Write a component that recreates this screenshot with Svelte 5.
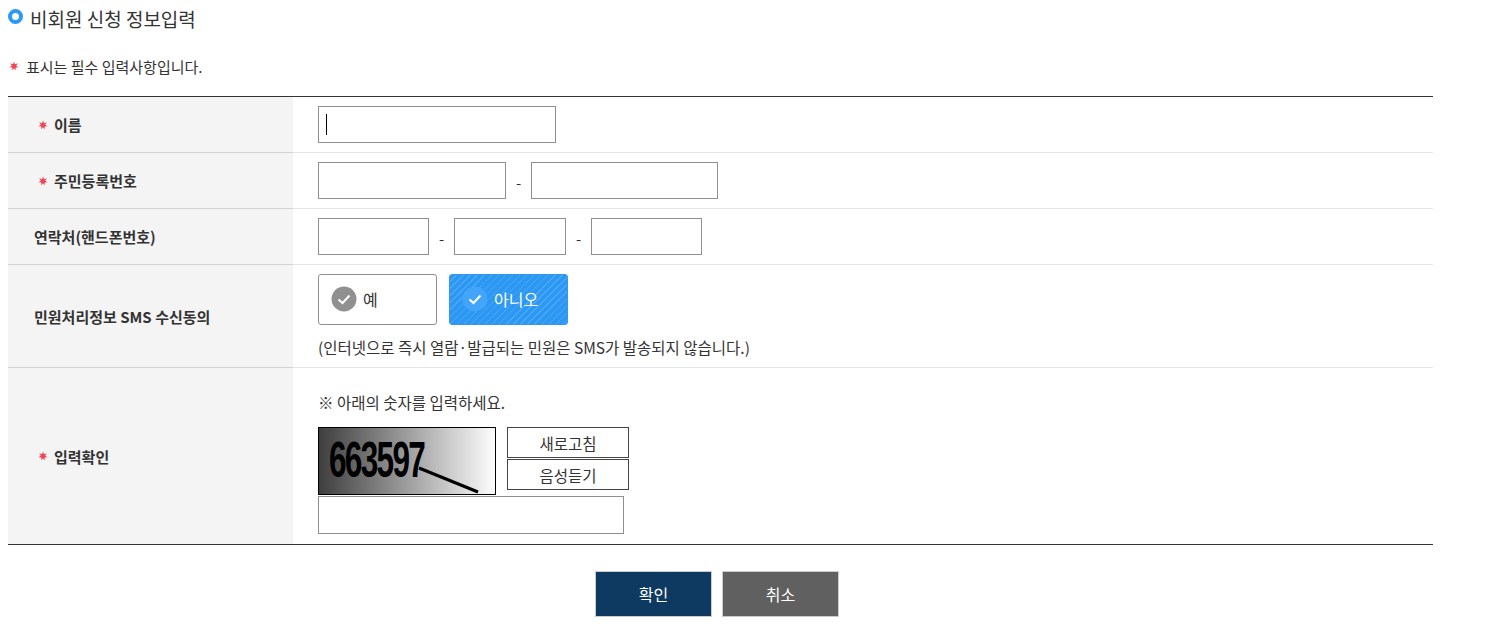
<script>
  const star = "M5 0.5 L6 3.2 L8.8 2.2 L7.2 4.7 L9.6 6.2 L6.7 6.4 L6.6 9.5 L5 7.2 L3.4 9.5 L3.3 6.4 L0.4 6.2 L2.8 4.7 L1.2 2.2 L4 3.2 Z"
</script>

{#snippet mark()}
  <svg class="mark" width="10" height="10" viewBox="0 0 10 10"><path d={star} fill="#ee4455" /></svg>
{/snippet}

{#snippet check(bg)}
  <svg class="check" width="26" height="26" viewBox="0 0 26 26">
    <circle cx="13" cy="13" r="12.5" fill={bg} />
    <path d="M7.5 13.5 L11.5 17 L18.5 9.5" fill="none" stroke="#fff" stroke-width="2" />
  </svg>
{/snippet}

<div class="page">
  <h2 class="title"><span class="dot"></span>비회원 신청 정보입력</h2>
  <p class="note">{@render mark()}<span>표시는 필수 입력사항입니다.</span></p>

  <div class="form">
    <div class="row r1">
      <div class="label req">{@render mark()}이름</div>
      <div class="field"><span class="name-input"><i class="caret"></i></span></div>
    </div>
    <div class="row r2">
      <div class="label req">{@render mark()}주민등록번호</div>
      <div class="field">
        <input class="w188" /><span class="dash">-</span><input class="w187" />
      </div>
    </div>
    <div class="row r3">
      <div class="label">연락처(핸드폰번호)</div>
      <div class="field">
        <input class="w111" /><span class="dash">-</span><input class="w112" /><span class="dash">-</span><input class="w111" />
      </div>
    </div>
    <div class="row r4">
      <div class="label">민원처리정보 SMS 수신동의</div>
      <div class="field stack">
        <div class="choices">
          <div class="choice">{@render check("#909090")}<span>예</span></div>
          <div class="choice on">{@render check("#42a5fb")}<span>아니오</span></div>
        </div>
        <p class="hint">(인터넷으로 즉시 열람·발급되는 민원은 SMS가 발송되지 않습니다.)</p>
      </div>
    </div>
    <div class="row r5">
      <div class="label req">{@render mark()}입력확인</div>
      <div class="field stack">
        <p class="guide">※ 아래의 숫자를 입력하세요.</p>
        <div class="captcha-row">
          <div class="captcha">
            <svg width="176" height="66" viewBox="0 0 176 66">
              <text x="10" y="49" transform="translate(10 0) scale(0.83 1.32) translate(-10 -12)" class="digits">663597</text>
              <path d="M100 40 L159 64" stroke="#000" stroke-width="3" />
            </svg>
          </div>
          <div class="captcha-btns">
            <button type="button">새로고침</button>
            <button type="button">음성듣기</button>
          </div>
        </div>
        <input class="answer" />
      </div>
    </div>
  </div>

  <div class="actions">
    <button type="button" class="ok">확인</button>
    <button type="button" class="cancel">취소</button>
  </div>
</div>

<style>
  :global(body) {
    background: #fff;
    font-family: "Noto Sans CJK KR", "Noto Sans", sans-serif;
    color: #333;
  }

  .page {
    width: 1425px;
    margin-left: 8px;
    height: 635px;
    overflow: hidden;
  }

  .title {
    display: flex;
    align-items: center;
    gap: 7px;
    margin: 0;
    height: 36px;
    font-size: 19px;
    font-weight: 400;
    color: #333;
  }

  .dot {
    width: 15px;
    height: 15px;
    box-sizing: border-box;
    border: 4px solid #2a9af2;
    border-radius: 50%;
    margin-top: -4px;
  }

  .note {
    display: flex;
    align-items: center;
    gap: 7px;
    margin: 0;
    height: 60px;
    padding: 0 0 10px 1px;
    box-sizing: border-box;
    font-size: 15px;
    color: #333;
    padding-top: 10px;
  }

  .form {
    border-top: 1px solid #333;
    border-bottom: 1px solid #333;
  }

  .row {
    display: grid;
    grid-template-columns: 285px 1fr;
    border-bottom: 1px solid #e6e6e6;
  }

  .row:last-child {
    border-bottom: 0;
  }

  .r1, .r2, .r3 { height: 55px; }
  .r4 { height: 102px; }
  .r5 { height: 176px; }

  .label {
    display: flex;
    align-items: center;
    background: #f4f4f4;
    padding-left: 26px;
    font-size: 15px;
    font-weight: 700;
    color: #333;
    box-shadow: 0 1px 0 #d4d4d4;
  }

  .r5 .label { box-shadow: none; }

  .req {
    padding-left: 30px;
    gap: 6px;
  }

  .field {
    display: flex;
    align-items: flex-start;
    padding: 9px 0 0 25px;
  }

  .stack {
    flex-direction: column;
  }

  input, .name-input {
    display: block;
    box-sizing: border-box;
    height: 37px;
    border: 1px solid #8f8f8f;
    background: #fff;
    padding: 0;
    margin: 0;
    outline: 0;
  }

  .name-input {
    width: 238px;
    display: flex;
    align-items: center;
    padding-left: 7px;
  }

  .caret {
    width: 1px;
    height: 21px;
    background: #000;
  }

  .w188 { width: 188px; }
  .w187 { width: 187px; }
  .w111 { width: 111px; }
  .w112 { width: 112px; }

  .dash {
    width: 25px;
    text-align: center;
    line-height: 42px;
    font-size: 15px;
    color: #333;
  }

  .choices {
    display: flex;
    gap: 12px;
  }

  .choice {
    display: flex;
    align-items: center;
    gap: 6px;
    width: 119px;
    height: 51px;
    box-sizing: border-box;
    border: 1px solid #8f8f8f;
    border-radius: 3px;
    padding: 0 0 2px 12px;
    font-size: 16px;
    color: #333;
  }

  .choice.on {
    border-color: #2f98f2;
    color: #fff;
    background: repeating-linear-gradient(135deg, #2c98f4 0 4px, #4aa8f6 4px 5px);
  }

  .hint {
    margin: 10px 0 0;
    font-size: 15.5px;
    line-height: 24px;
    color: #333;
  }

  .r4 .field { padding-top: 9px; }
  .r5 .field { padding-top: 22px; }

  .guide {
    margin: 0 0 13px;
    font-size: 15.5px;
    line-height: 24px;
    color: #333;
  }

  .captcha-row {
    display: flex;
    gap: 11px;
  }

  .captcha {
    width: 178px;
    height: 68px;
    box-sizing: border-box;
    border: 1px solid #000;
    background: linear-gradient(90deg, #3e3e3e, #fdfdfd);
  }

  .captcha svg {
    display: block;
  }

  .digits {
    font-family: "Liberation Sans", sans-serif;
    font-size: 38px;
    font-weight: 700;
    letter-spacing: -2px;
    fill: #000;
  }

  .captcha-btns {
    display: flex;
    flex-direction: column;
    gap: 1px;
  }

  .captcha-btns button {
    width: 122px;
    height: 31px;
    box-sizing: border-box;
    border: 1px solid #444;
    background: #fff;
    padding: 0;
    font-family: inherit;
    font-size: 15.5px;
    color: #333;
  }

  .answer {
    width: 306px;
    height: 38px;
    margin-top: 1px;
  }

  .actions {
    display: flex;
    justify-content: center;
    gap: 10px;
    padding-top: 26px;
    margin-left: -7px;
  }

  .actions button {
    width: 117px;
    height: 46px;
    box-sizing: border-box;
    border: 1px solid #ccc;
    color: #fff;
    font-family: inherit;
    font-size: 16px;
    padding: 0;
  }

  .ok { background: #0e3a62; }
  .cancel { background: #606060; }
</style>
